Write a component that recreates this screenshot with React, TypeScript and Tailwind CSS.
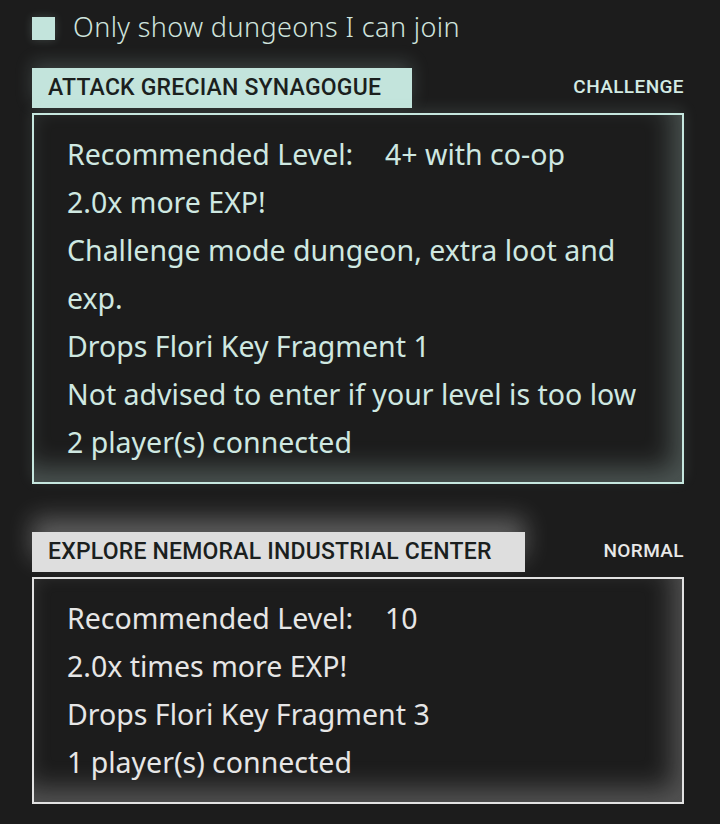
const challenge = [
  { label: "Recommended Level:", value: "4+ with co-op" },
  "2.0x more EXP!",
  "Challenge mode dungeon, extra loot and exp.",
  "Drops Flori Key Fragment 1",
  "Not advised to enter if your level is too low",
  "2 player(s) connected",
];

const normal = [
  { label: "Recommended Level:", value: "10" },
  "2.0x times more EXP!",
  "Drops Flori Key Fragment 3",
  "1 player(s) connected",
];

type Line = string | { label: string; value: string };

const DungeonCard = ({
  title,
  mode,
  lines,
  tabWidth,
  accent,
}: {
  title: string;
  mode: string;
  lines: Line[];
  tabWidth: string;
  accent: "mint" | "gray";
}) => {
  const mint = accent === "mint";
  return (
    <div className="flex flex-col">
      <div className="flex items-end justify-between">
        <div
          className={`${tabWidth} h-[40px] pl-4 flex items-center text-[23px] font-medium tracking-[0.2px] text-[#1b1f1e] ${
            mint
              ? "bg-[#c3e4dc] shadow-[0_-6px_18px_rgba(195,228,220,0.18)]"
              : "bg-[#dedede] shadow-[0_-14px_24px_rgba(230,230,230,0.32)]"
          }`}
          style={{ fontFamily: "Roboto, sans-serif" }}
        >
          {title}
        </div>
        <div
          className={`pb-[7px] text-[19px] font-medium tracking-[0.4px] ${mint ? "text-[#d3ebe4]" : "text-[#e8e8e8]"}`}
          style={{ fontFamily: "Roboto, sans-serif" }}
        >
          {mode}
        </div>
      </div>
      <div
        className={`mt-[5px] border-2 pl-[33px] pr-6 pt-[15px] pb-[16px] ${
          mint
            ? "border-[#c6e7df] text-[#cfe8e1] shadow-[inset_-10px_-14px_26px_rgba(198,231,223,0.28),0_-4px_14px_rgba(198,231,223,0.12)]"
            : "border-[#e2e2e2] text-[#e6e6e6] shadow-[inset_-10px_-14px_26px_rgba(226,226,226,0.28)]"
        }`}
      >
        {lines.map((l, i) =>
          typeof l === "string" ? (
            <div key={i} className="text-[28.5px] leading-[48px]">
              {l}
            </div>
          ) : (
            <div key={i} className="text-[28.5px] leading-[48px] flex">
              <span className="w-[318px]">{l.label}</span>
              <span>{l.value}</span>
            </div>
          )
        )}
      </div>
    </div>
  );
};

export default function App() {
  return (
    <div
      className="w-[720px] h-[824px] bg-[#1c1c1c] pl-8 pr-9 pt-[16px] overflow-hidden"
      style={{ fontFamily: "'Noto Sans', sans-serif" }}
    >
      <div className="flex items-center gap-[18px] h-[24px]">
        <div className="w-[23px] h-[23px] bg-[#c3e4dc] shadow-[0_0_10px_rgba(195,228,220,0.2)]" />
        <span className="text-[27px] font-light tracking-[0.4px] text-[#cfe3dd] leading-none -mt-[3px]">
          Only show dungeons I can join
        </span>
      </div>
      <div className="mt-[28px]">
        <DungeonCard
          title="ATTACK GRECIAN SYNAGOGUE"
          mode="CHALLENGE"
          lines={challenge}
          tabWidth="w-[380px]"
          accent="mint"
        />
      </div>
      <div className="mt-[48px]">
        <DungeonCard
          title="EXPLORE NEMORAL INDUSTRIAL CENTER"
          mode="NORMAL"
          lines={normal}
          tabWidth="w-[493px]"
          accent="gray"
        />
      </div>
    </div>
  );
}
